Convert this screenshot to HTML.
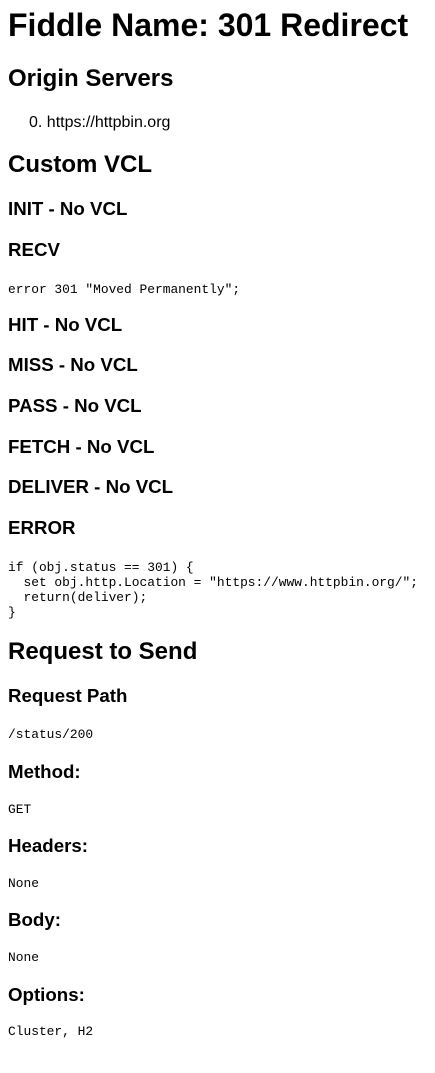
<!DOCTYPE html>
<html><head><meta charset="utf-8"><style>
html,body{margin:0;padding:0;background:#fff;width:435px;height:1073px;overflow:hidden;color:#000}
.e{position:absolute;left:8px;margin:0;line-height:1;white-space:pre;font-family:"Liberation Sans",Arial,sans-serif}
.h1{font-size:32px;font-weight:bold}
.h2{font-size:24px;font-weight:bold}
.h3{font-size:18.7px;font-weight:bold}
.p{font-size:16px}
.m{font-family:"Liberation Mono","Courier New",monospace;font-size:12.9px}
.pre{font-family:"Liberation Mono","Courier New",monospace;font-size:12.9px;line-height:15px}
</style></head><body>
<div class="e h1" style="top:8.9px">Fiddle Name: 301 Redirect</div>
<div class="e h2" style="top:66.7px">Origin Servers</div>
<div class="e p" style="top:114.5px;left:29px">0. https://httpbin.org</div>
<div class="e h2" style="top:152.7px">Custom VCL</div>
<div class="e h3" style="top:200.2px">INIT - No VCL</div>
<div class="e h3" style="top:241.2px">RECV</div>
<div class="e m" style="top:284px">error 301 "Moved Permanently";</div>
<div class="e h3" style="top:315.7px">HIT - No VCL</div>
<div class="e h3" style="top:356.2px">MISS - No VCL</div>
<div class="e h3" style="top:397.2px">PASS - No VCL</div>
<div class="e h3" style="top:438.2px">FETCH - No VCL</div>
<div class="e h3" style="top:478.2px">DELIVER - No VCL</div>
<div class="e h3" style="top:519.2px">ERROR</div>
<div class="e pre" style="top:560px">if (obj.status == 301) {
  set obj.http.Location = "https://www.httpbin.org/";
  return(deliver);
}</div>
<div class="e h2" style="top:639.7px">Request to Send</div>
<div class="e h3" style="top:687.2px">Request Path</div>
<div class="e m" style="top:729px">/status/200</div>
<div class="e h3" style="top:762.7px">Method:</div>
<div class="e m" style="top:804px">GET</div>
<div class="e h3" style="top:836.7px">Headers:</div>
<div class="e m" style="top:878px">None</div>
<div class="e h3" style="top:910.7px">Body:</div>
<div class="e m" style="top:952px">None</div>
<div class="e h3" style="top:985.7px">Options:</div>
<div class="e m" style="top:1026px">Cluster, H2</div>
</body></html>
